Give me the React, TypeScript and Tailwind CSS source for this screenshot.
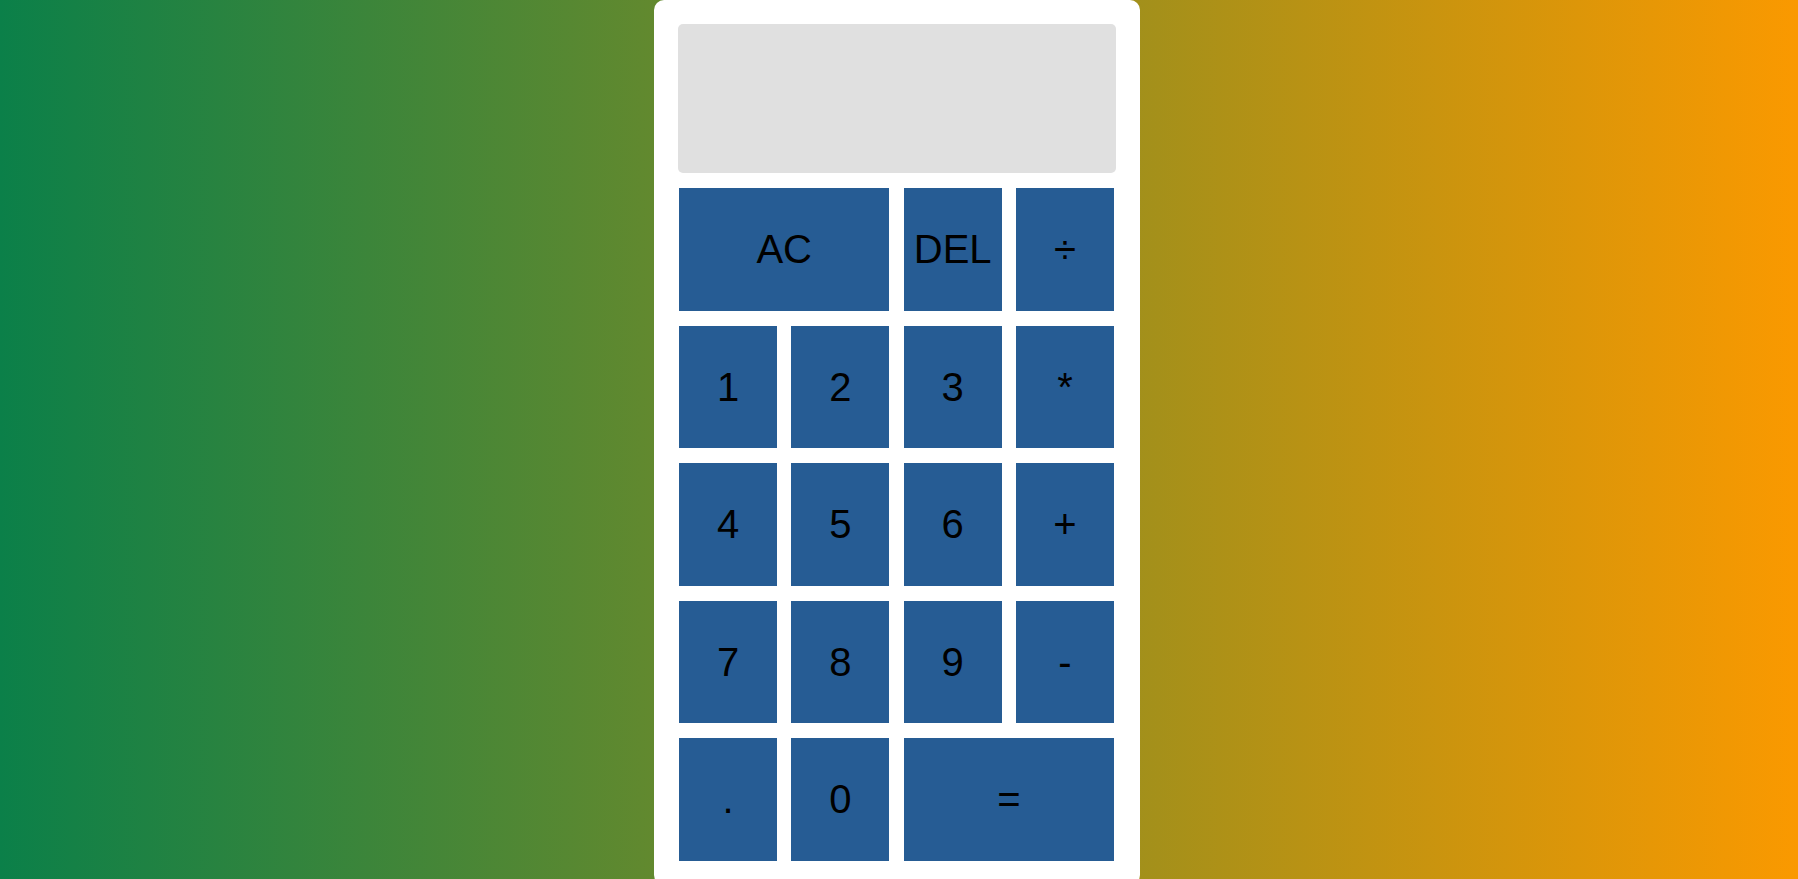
import { useState } from "react";

const keys = [
    { label: "AC", wide: true },
    { label: "DEL" },
    { label: "÷" },
    { label: "1" },
    { label: "2" },
    { label: "3" },
    { label: "*" },
    { label: "4" },
    { label: "5" },
    { label: "6" },
    { label: "+" },
    { label: "7" },
    { label: "8" },
    { label: "9" },
    { label: "-" },
    { label: "." },
    { label: "0" },
    { label: "=", wide: true },
];

export default function App() {
    const [display, setDisplay] = useState("");

    const press = (k: string) => {
        if (k === "AC") return setDisplay("");
        if (k === "DEL") return setDisplay((d) => d.slice(0, -1));
        if (k === "=") {
            try {
                const expr = display.replace(/÷/g, "/");
                // eslint-disable-next-line no-new-func
                const result = Function(`"use strict"; return (${expr})`)();
                setDisplay(String(result));
            } catch {
                setDisplay("Error");
            }
            return;
        }
        setDisplay((d) => d + k);
    };

    return (
        <div
            className="min-h-screen flex justify-center pr-1 bg-[linear-gradient(to_right,#0b8049,#fa9900)]"
            style={{ fontFamily: '"Liberation Sans", Arial, sans-serif' }}
        >
            <div className="w-[486px] bg-white rounded-[10px] px-6 pt-6 pb-6 flex flex-col">
                {/* Display */}
                <div className="h-[149px] w-full bg-[#e0e0e0] rounded-[5px] flex items-end justify-end px-4 pb-3 text-[40px] text-black overflow-hidden">
                    {display}
                </div>

                {/* Keys */}
                <div className="mt-[15px] px-px grid grid-cols-[98px_98px_98px_98px] auto-rows-[122.5px] gap-x-[14.33px] gap-y-[15px]">
                    {keys.map((k) => (
                        <button
                            key={k.label}
                            onClick={() => press(k.label)}
                            className={`bg-[#265c94] text-black text-[40px] leading-none flex items-center justify-center cursor-pointer ${
                                k.wide ? "col-span-2" : ""
                            }`}
                        >
                            {k.label}
                        </button>
                    ))}
                </div>
            </div>
        </div>
    );
}
